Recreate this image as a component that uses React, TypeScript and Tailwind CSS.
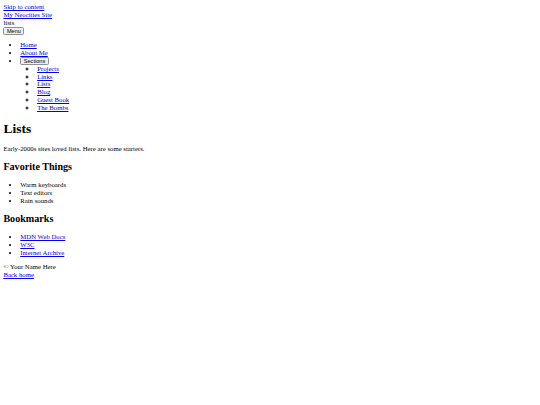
const link = 'text-[#0000ee] underline';
const btn =
  "rounded-[1.5px] border border-[#8f8f8f] bg-[#efefef] px-[2.5px] py-0 font-['Liberation_Sans',Arial,sans-serif] text-[5.625px] leading-[normal] text-black";

const sections = ['Projects', 'Links', 'Lists', 'Blog', 'Guest Book', 'The Bombs'];
const favorites = ['Warm keyboards', 'Text editors', 'Rain sounds'];
const bookmarks = ['MDN Web Docs', 'W3C', 'Internet Archive'];

export default function App() {
  return (
    <div className="min-h-[405px] bg-white p-[3.375px] font-['Liberation_Serif','Times_New_Roman',serif] text-[6.75px] leading-[7.76px] text-black">
      <header>
        <div>
          <a href="#main" className={link}>
            Skip to content
          </a>
        </div>
        <div>
          <a href="#" className={link}>
            My Neocities Site
          </a>
        </div>
        <div>lists</div>
        <nav>
          <button className={btn}>Menu</button>
          <ul className="my-[6.75px] list-disc pl-[16.875px]">
            <li>
              <a href="#" className={link}>
                Home
              </a>
            </li>
            <li>
              <a href="#" className={link}>
                About Me
              </a>
            </li>
            <li>
              <button className={btn}>Sections</button>
              <ul className="list-[circle] pl-[16.875px]">
                {sections.map((s) => (
                  <li key={s}>
                    <a href="#" className={link}>
                      {s}
                    </a>
                  </li>
                ))}
              </ul>
            </li>
          </ul>
        </nav>
      </header>

      <main id="main">
        <h1 className="my-[9.05px] text-[13.5px] leading-[15.5px] font-bold">Lists</h1>
        <p className="my-[6.75px]">Early-2000s sites loved lists. Here are some starters.</p>

        <h2 className="my-[8.4px] text-[10.125px] leading-[11.64px] font-bold">Favorite Things</h2>
        <ul className="my-[6.75px] list-disc pl-[16.875px]">
          {favorites.map((f) => (
            <li key={f}>{f}</li>
          ))}
        </ul>

        <h2 className="my-[8.4px] text-[10.125px] leading-[11.64px] font-bold">Bookmarks</h2>
        <ul className="my-[6.75px] list-disc pl-[16.875px]">
          {bookmarks.map((b) => (
            <li key={b}>
              <a href="#" className={link}>
                {b}
              </a>
            </li>
          ))}
        </ul>
      </main>

      <footer>
        <div>© Your Name Here</div>
        <div>
          <a href="#" className={link}>
            Back home
          </a>
        </div>
      </footer>
    </div>
  );
}
